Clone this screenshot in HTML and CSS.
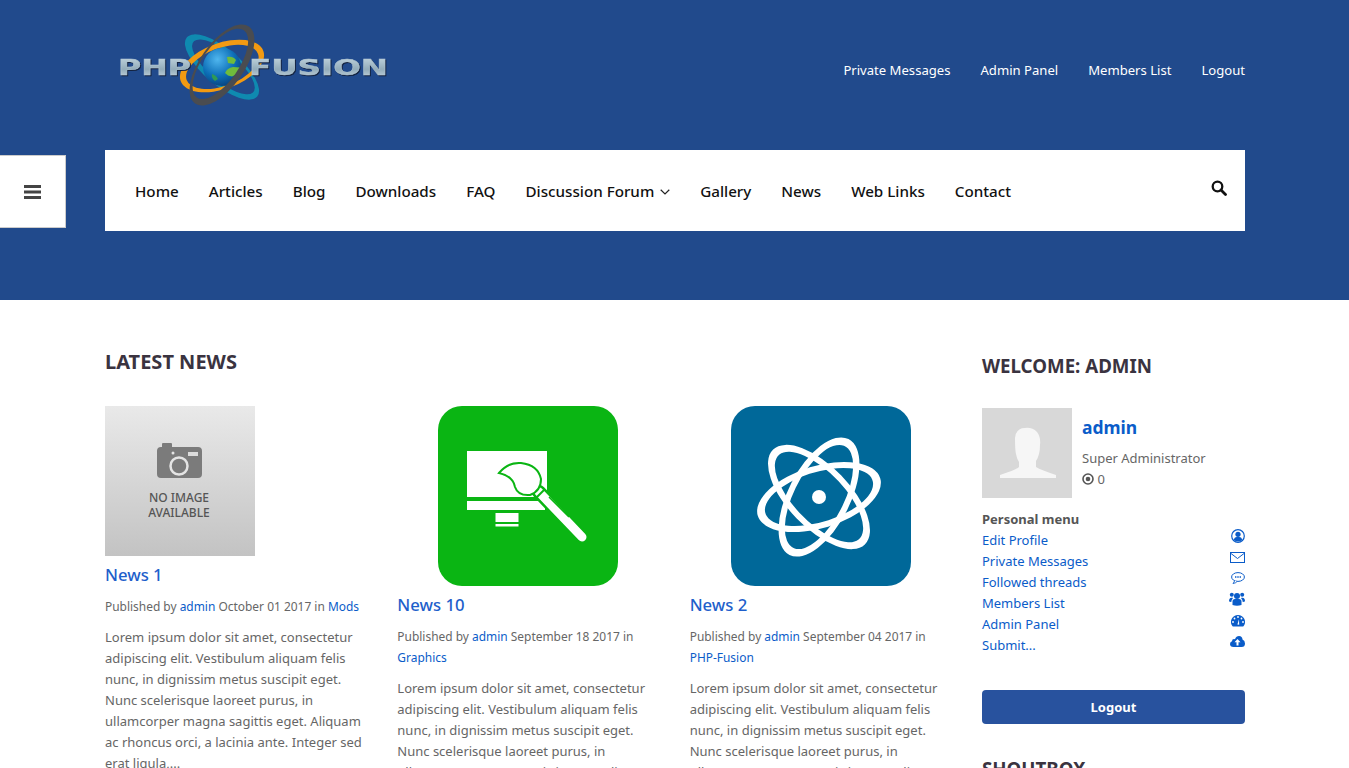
FILE: index.html
```html
<!DOCTYPE html>
<html lang="en">
<head>
<meta charset="utf-8">
<title>PHP-Fusion</title>
<link rel="stylesheet" href="styles.css">
</head>
<body>
<header class="header">
  <div class="container">
    <div class="top">
      <svg class="logo" width="295" height="110" viewBox="5 0 295 110" role="img" aria-label="PHP-Fusion">
        <defs>
          <linearGradient id="metal" x1="0" y1="0" x2="0" y2="1">
            <stop offset="0" stop-color="#c3d6e0"/><stop offset=".55" stop-color="#93acba"/><stop offset="1" stop-color="#cbdae2"/>
          </linearGradient>
          <radialGradient id="globe" cx=".38" cy=".3" r=".8">
            <stop offset="0" stop-color="#4fb6ee"/><stop offset=".55" stop-color="#0d6fb8"/><stop offset="1" stop-color="#07386f"/>
          </radialGradient>
        </defs>
        <path transform="rotate(40 122 57)" fill-rule="evenodd" fill="#0f8ab0" d="M76 57a46 18 0 1 0 92 0a46 18 0 1 0-92 0zM84 55a38 14 0 1 0 78 2a38 14 0 1 0-78-2z"/>
        <path transform="rotate(-20 122 56)" fill-rule="evenodd" fill="#f29a12" d="M78 56a44 23 0 1 0 88 0a44 23 0 1 0-88 0zM84 57a38 19 0 1 0 76 0a38 19 0 1 0-76 0z"/>
        <text class="logo-text" x="18" y="65" textLength="73" lengthAdjust="spacingAndGlyphs" fill="url(#metal)">PHP</text>
        <text class="logo-text" x="149" y="65" textLength="139" lengthAdjust="spacingAndGlyphs" fill="url(#metal)">FUSION</text>
        <circle cx="122" cy="57" r="19" fill="url(#globe)"/>
        <path d="M127 47q6-1 9 3l-2 4-6-1zM125 63q2-5 8-6l7 .5q-2 7-8 9l-4-1z" fill="#6fbb3c"/>
        <path d="M112 64q4 1 6 5l-3 2q-4-3-3-7z" fill="#2f9a55"/>
        <path transform="rotate(-55 122 55)" fill-rule="evenodd" fill="#4a4c50" d="M75 55a47 22 0 1 0 94 0a47 22 0 1 0-94 0zM81 53a41 18 0 1 0 82 0a41 18 0 1 0-82 0z"/>
      </svg>
      <nav class="toplinks">
        <a>Private Messages</a><a>Admin Panel</a><a>Members List</a><a>Logout</a>
      </nav>
    </div>
    <nav class="mainnav">
      <a>Home</a><a>Articles</a><a>Blog</a><a>Downloads</a><a>FAQ</a>
      <a class="drop">Discussion Forum
        <svg width="10" height="6" viewBox="0 0 10 6"><path d="M.7.8 5 5l4.3-4.2" fill="none" stroke="#222" stroke-width="1.2"/></svg>
      </a>
      <a>Gallery</a><a>News</a><a>Web Links</a><a>Contact</a>
      <svg class="search" width="16" height="16" viewBox="0 0 16 16"><circle cx="6.500" cy="6.500" r="4.800" fill="none" stroke="#111" stroke-width="2.300"/><path d="M10 10l4.500 4.500" stroke="#111" stroke-width="2.800" stroke-linecap="round"/></svg>
    </nav>
  </div>
  <button class="toggle" aria-label="Menu">
    <svg width="17" height="14" viewBox="0 0 17 14"><path d="M0 0h17v3H0zM0 5.500h17v3H0zM0 11h17v3H0z" fill="#444"/></svg>
  </button>
</header>

<main class="container content">
  <section class="news">
    <h2 class="heading">LATEST NEWS</h2>
    <div class="cards">
      <article class="card">
        <svg class="thumb" width="150" height="150" viewBox="0 0 150 150">
          <defs><linearGradient id="noimg" x1="0" y1="0" x2="0" y2="1"><stop offset="0" stop-color="#e9e9e9"/><stop offset="1" stop-color="#c3c3c3"/></linearGradient></defs>
          <rect width="150" height="150" fill="url(#noimg)"/>
          <path d="M52 45q0-4 4-4h1v-3q0-1 1-1h8q1 0 1 1v3h26q4 0 4 4v23q0 4-4 4H56q-4 0-4-4z" fill="#7b7b7b"/>
          <circle cx="74" cy="60" r="8.500" fill="none" stroke="#e4e4e4" stroke-width="2.500"/>
          <rect x="83" y="46" width="10" height="4" fill="#dcdcdc"/>
          <circle cx="68" cy="47" r="1.500" fill="#e4e4e4"/>
          <text class="noimg" x="74" y="96">NO IMAGE</text>
          <text class="noimg" x="74" y="111">AVAILABLE</text>
        </svg>
        <h3 class="title">News 1</h3>
        <p class="meta">Published by <a>admin</a> October 01 2017 in <a>Mods</a></p>
        <p class="body">Lorem ipsum dolor sit amet, consectetur adipiscing elit. Vestibulum aliquam felis nunc, in dignissim metus suscipit eget. Nunc scelerisque laoreet purus, in ullamcorper magna sagittis eget. Aliquam ac rhoncus orci, a lacinia ante. Integer sed erat ligula,...</p>
      </article>
      <article class="card">
        <svg class="thumb center" width="180" height="180" viewBox="0 0 180 180">
          <rect width="180" height="180" rx="24" fill="#0ab513"/>
          <path d="M29 45h80v46H29zM29 95h78v9H29zM57.500 107h23v9h-23zM57.500 118h23v2.500h-23z" fill="#fff"/>
          <path d="M101 86l43 45" stroke="#0ab513" stroke-width="14" stroke-linecap="round"/>
          <path d="M101 86l43 45" stroke="#fff" stroke-width="9" stroke-linecap="round"/>
          <path d="M111 91l20 20" stroke="#0ab513" stroke-width="1.500"/>
          <path d="M99 91l8-8" stroke="#0ab513" stroke-width="2"/>
          <path d="M61 67q9-11 22-10 17 2 20 16 0 12-11 16-12 1-15-8-2-11-16-14z" fill="#fff" stroke="#0ab513" stroke-width="2"/>
        </svg>
        <h3 class="title">News 10</h3>
        <p class="meta">Published by <a>admin</a> September 18 2017 in <a>Graphics</a></p>
        <p class="body">Lorem ipsum dolor sit amet, consectetur adipiscing elit. Vestibulum aliquam felis nunc, in dignissim metus suscipit eget. Nunc scelerisque laoreet purus, in ullamcorper magna sagittis eget. Aliquam ac rhoncus orci, a lacinia ante. Integer sed erat ligula,...</p>
      </article>
      <article class="card">
        <svg class="thumb center" width="180" height="180" viewBox="0 0 180 180">
          <rect width="180" height="180" rx="24" fill="#006899"/>
          <g fill="#fff" fill-rule="evenodd">
            <path transform="rotate(-17 88 91)" d="M24 91a64 31 0 1 0 128 0a64 31 0 1 0-128 0zM32 92a56 25 0 1 0 112-2a56 25 0 1 0-112 2z"/>
            <path transform="rotate(46 88 91)" d="M22 91a66 31 0 1 0 132 0a66 31 0 1 0-132 0zM30 90a58 25 0 1 0 116 2a58 25 0 1 0-116-2z"/>
            <path transform="rotate(-63 88 91)" d="M23 91a65 31 0 1 0 130 0a65 31 0 1 0-130 0zM31 92a57 25 0 1 0 114-2a57 25 0 1 0-114 2z"/>
          </g>
          <circle cx="88" cy="91" r="7" fill="#fff"/>
        </svg>
        <h3 class="title">News 2</h3>
        <p class="meta">Published by <a>admin</a> September 04 2017 in <a>PHP-Fusion</a></p>
        <p class="body">Lorem ipsum dolor sit amet, consectetur adipiscing elit. Vestibulum aliquam felis nunc, in dignissim metus suscipit eget. Nunc scelerisque laoreet purus, in ullamcorper magna sagittis eget. Aliquam ac rhoncus orci, a lacinia ante. Integer sed erat ligula,...</p>
      </article>
    </div>
  </section>

  <aside class="side">
    <h2 class="heading small">WELCOME: ADMIN</h2>
    <div class="profile">
      <svg class="avatar" width="90" height="90" viewBox="0 0 90 90">
        <rect width="90" height="90" fill="#d8d8d8"/>
        <path d="M43 20q-9 0-10 10 0 12 1 16 1 5 3 8v5q-3 3-19 8v3h56v-3q-15-5-20-8v-6q4-6 4-16 1-8-3-13-5-5-12-4z" fill="#f6f6f6"/>
      </svg>
      <div class="who">
        <a class="name">admin</a>
        <div class="role">Super Administrator</div>
        <div class="points">
          <svg width="12" height="12" viewBox="0 0 12 12"><circle cx="6" cy="6" r="5" fill="none" stroke="#555" stroke-width="1.600"/><circle cx="6" cy="6" r="2.300" fill="#555"/></svg>
          0
        </div>
      </div>
    </div>
    <div class="menu-title">Personal menu</div>
    <ul class="menu">
      <li><a>Edit Profile</a>
        <svg class="ic-up" width="14" height="14" viewBox="0 0 14 14"><circle cx="7" cy="7" r="6.300" fill="none" stroke="#0a5cc9" stroke-width="1.200"/><circle cx="7" cy="5.300" r="2.600" fill="#0a5cc9"/><path d="M2.800 11q.5-3 3-3h2.400q2.500 0 3 3-4 3-8.400 0z" fill="#0a5cc9"/></svg></li>
      <li><a>Private Messages</a>
        <svg class="ic-dn" width="15" height="11" viewBox="0 0 15 11"><rect x=".5" y=".5" width="14" height="10" fill="none" stroke="#0a5cc9"/><path d="M1 1.500 7.500 6.500 14 1.500" fill="none" stroke="#0a5cc9"/></svg></li>
      <li><a>Followed threads</a>
        <svg width="14" height="12" viewBox="0 0 14 12"><ellipse cx="7" cy="5" rx="6.400" ry="4.400" fill="none" stroke="#0a5cc9"/><path d="M3.500 8.500q0 1.500-1.500 3 3-.5 4-2" fill="#fff" stroke="#0a5cc9" stroke-width=".9"/><path d="M4 4.300h1.400v1.400H4zM6.300 4.300h1.400v1.400H6.300zM8.600 4.300H10v1.400H8.600z" fill="#0a5cc9"/></svg></li>
      <li><a>Members List</a>
        <svg class="ic-up" width="16" height="14" viewBox="0 0 16 14"><g fill="#0a5cc9"><circle cx="8" cy="4" r="3"/><circle cx="2.800" cy="2.800" r="2"/><circle cx="13.200" cy="2.800" r="2"/><path d="M3.500 13V9.500Q3.500 7 6 7h4q2.500 0 2.500 2.500V13q-4.500 1.500-9 0zM0 9q0-3 2.500-3.200h1.200Q4 6.500 3 7.500 2.300 8.500 2.300 10 0 9.800 0 9zM16 9q0-3-2.500-3.200h-1.200q-.3.700.7 1.700.7 1 .7 2.500 2.300-.2 2.300-1z"/></g></svg></li>
      <li><a>Admin Panel</a>
        <svg class="ic-dn" width="14" height="12" viewBox="0 0 14 12"><path d="M7 0a7 7 0 0 1 6 10.600l-.8.900H1.800l-.8-.9A7 7 0 0 1 7 0z" fill="#0a5cc9"/><g fill="#fff"><circle cx="7" cy="2" r=".9"/><circle cx="3.500" cy="3.500" r=".9"/><circle cx="10.500" cy="3.500" r=".9"/><circle cx="2" cy="7" r=".9"/><circle cx="12" cy="7" r=".9"/><path d="M6.400 9.500 8 4.200 8.200 9.800z"/></g></svg></li>
      <li><a>Submit...</a>
        <svg class="ic-dn" width="15" height="11" viewBox="0 0 15 11"><path d="M3.500 11Q0 11 0 8q0-2.200 2-2.800Q2 3 4 3q.7 0 1 .3Q6.200 0 9 0q3.300 0 3.500 3.500Q15 4.300 15 7.500 15 11 11.500 11z" fill="#0a5cc9"/><path d="M7.500 3 4.500 6.200h2V9.500h2V6.200h2z" fill="#fff"/></svg></li>
    </ul>
    <a class="btn">Logout</a>
    <h2 class="heading small shout">SHOUTBOX</h2>
  </aside>
</main>
</body>
</html>
```
FILE: styles.css
```css
* { box-sizing: border-box; }
html, body { margin: 0; height: 768px; overflow: hidden; }
body { font-family: "Noto Sans", "Open Sans", sans-serif; font-size: 13px; line-height: 21px; color: #666; background: #fff; }
a { color: #0a5cc9; text-decoration: none; }

.container { width: 1140px; margin: 0 0 0 105px; }

.header { position: relative; height: 300px; background: #214a8c; }
.top { height: 140px; margin-bottom: 10px; display: flex; justify-content: space-between; align-items: center; }
.logo { align-self: flex-start; margin-top: 10px; }
.logo-text { font-family: "DejaVu Sans", sans-serif; font-weight: 700; font-size: 21px; stroke: #b4c8d4; stroke-width: .4px; filter: drop-shadow(1px 1px 0 #14233f); }
.toplinks { display: flex; gap: 30px; }
.toplinks a { color: #fff; font-size: 13.1px; }

.mainnav { height: 81px; background: #fff; padding: 0 18px 0 30px; display: flex; align-items: center; gap: 30px; position: relative; }
.mainnav a { color: #111; font-size: 15.2px; font-weight: 500; padding-top: 1px; }
.mainnav .drop svg { margin-left: 2px; vertical-align: 2px; }
.search { margin-left: auto; margin-top: -5px; }

.toggle { position: absolute; left: 0; top: 155px; width: 66px; height: 73px; background: #fff; border: 1px solid #ccc; border-left: 0; padding: 0; display: flex; align-items: center; justify-content: center; }

.content { display: grid; grid-template-columns: 847px 263px; column-gap: 30px; padding-top: 50px; }
.heading { margin: 0; font-size: 20px; line-height: 24px; font-weight: 700; color: #3a3340; }
.heading.small { font-size: 18.7px; padding-top: 4px; }
.cards { display: grid; grid-template-columns: repeat(3, 1fr); column-gap: 30px; margin-top: 32px; align-items: start; }
.thumb { display: block; }
.thumb.center { margin: 0 auto; }
.noimg { font-family: "Noto Sans", sans-serif; font-size: 12px; font-weight: 500; text-anchor: middle; fill: #555; }
.title { margin: 7px 0 0; font-size: 16.7px; line-height: 24px; font-weight: 500; color: #1e5fcb; }
.meta { margin: 9px 0 0; font-size: 11.95px; }
.body { margin: 10px 0 0; }

.profile { display: flex; gap: 10px; margin-top: 30px; }
.avatar { display: block; flex: none; }
.name { display: block; margin-top: 7px; font-size: 17.5px; line-height: 24px; font-weight: 700; }
.role { margin-top: 9px; }
.points svg { vertical-align: -1px; }
.menu-title { margin-top: 11px; font-size: 13px; font-weight: 700; color: #555; }
.menu { list-style: none; margin: 0; padding: 0; }
.menu li { display: flex; justify-content: space-between; align-items: flex-start; height: 21px; }
.ic-up { margin-top: -1px; }
.ic-dn { margin-top: 1px; }
.btn { display: block; margin-top: 34px; height: 34px; line-height: 34px; text-align: center; background: #28529e; border-radius: 4px; color: #fff; font-size: 13px; font-weight: 700; }
.shout { margin-top: 29px; }
```
